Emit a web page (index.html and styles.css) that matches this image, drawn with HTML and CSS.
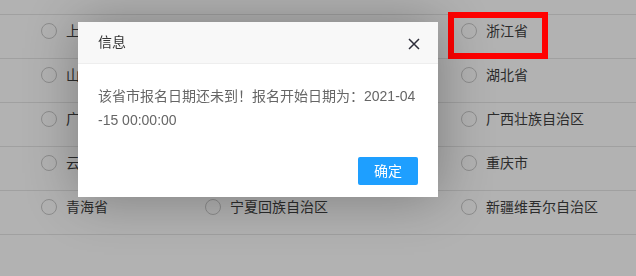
FILE: index.html
```html
<!DOCTYPE html>
<html lang="zh-CN">
<head>
<meta charset="utf-8">
<title>信息</title>
<link rel="stylesheet" href="styles.css">
</head>
<body>
<div class="list">
  <div class="spacer"></div>
  <div class="row">
    <label class="item"><span class="radio"></span><span>上海市</span></label>
    <span class="cell"></span>
    <label class="item"><span class="radio"></span><span>浙江省</span></label>
  </div>
  <div class="row">
    <label class="item"><span class="radio"></span><span>山东省</span></label>
    <span class="cell"></span>
    <label class="item"><span class="radio"></span><span>湖北省</span></label>
  </div>
  <div class="row">
    <label class="item"><span class="radio"></span><span>广东省</span></label>
    <span class="cell"></span>
    <label class="item"><span class="radio"></span><span>广西壮族自治区</span></label>
  </div>
  <div class="row">
    <label class="item"><span class="radio"></span><span>云南省</span></label>
    <span class="cell"></span>
    <label class="item"><span class="radio"></span><span>重庆市</span></label>
  </div>
  <div class="row">
    <label class="item"><span class="radio"></span><span>青海省</span></label>
    <label class="item"><span class="radio"></span><span>宁夏回族自治区</span></label>
    <label class="item"><span class="radio"></span><span>新疆维吾尔自治区</span></label>
  </div>
</div>

<div class="shade"></div>
<div class="highlight"></div>

<div class="dialog">
  <div class="dialog-title">信息</div>
  <div class="dialog-content">该省市报名日期还未到！报名开始日期为：2021-04-15 00:00:00</div>
  <div class="dialog-btns"><span class="btn">确定</span></div>
  <span class="close">
    <svg width="12" height="12" viewBox="0 0 12 12"><path d="M1 1L11 11M11 1L1 11" stroke="#2e2e3a" stroke-width="1.5" fill="none"/></svg>
  </span>
</div>
</body>
</html>
```

FILE: styles.css
```css
html, body {
  margin: 0;
  padding: 0;
  background: #fff;
  width: 636px;
  height: 276px;
  overflow: hidden;
  font-family: "Liberation Sans", "Noto Sans CJK SC", sans-serif;
  font-size: 14px;
}

.list {
  display: flex;
  flex-direction: column;
}

.spacer {
  height: 14px;
  border-bottom: 1px solid #e6e6e6;
}

.row {
  height: 35px;
  padding-top: 8px;
  padding-left: 41px;
  border-bottom: 1px solid #e6e6e6;
  display: grid;
  grid-template-columns: 164px 256px 1fr;
}

.item {
  display: flex;
  align-items: center;
  gap: 9px;
  height: 16px;
  color: #3f3f3f;
  line-height: 16px;
}

.radio {
  width: 16px;
  height: 16px;
  box-sizing: border-box;
  border: 1px solid #cacaca;
  border-radius: 50%;
  flex: none;
}

.shade {
  position: fixed;
  inset: 0;
  background: rgba(0, 0, 0, 0.3);
}

.highlight {
  position: absolute;
  left: 448px;
  top: 12px;
  width: 100px;
  height: 47px;
  box-sizing: border-box;
  border: 6px solid #ff0000;
}

.dialog {
  position: absolute;
  left: 78px;
  top: 22px;
  width: 360px;
  background: #fff;
  box-shadow: 1px 1px 50px rgba(0, 0, 0, 0.3);
}

.dialog-title {
  height: 41px;
  line-height: 41px;
  padding: 0 80px 0 20px;
  border-bottom: 1px solid #eee;
  background: #f8f8f8;
  color: #333;
  font-size: 14px;
}

.dialog-content {
  padding: 20px;
  line-height: 24px;
  word-break: break-all;
  color: #666;
  font-size: 14px;
}

.dialog-btns {
  display: flex;
  justify-content: flex-end;
  padding: 0 15px 12px;
}

.btn {
  width: 30px;
  height: 28px;
  line-height: 28px;
  margin: 5px 5px 0;
  padding: 0 15px;
  background: #1e9fff;
  color: #fff;
  border-radius: 2px;
  font-size: 14px;
  text-align: center;
}

.close {
  position: absolute;
  right: 18px;
  top: 16px;
  width: 12px;
  height: 12px;
  display: flex;
}
```
